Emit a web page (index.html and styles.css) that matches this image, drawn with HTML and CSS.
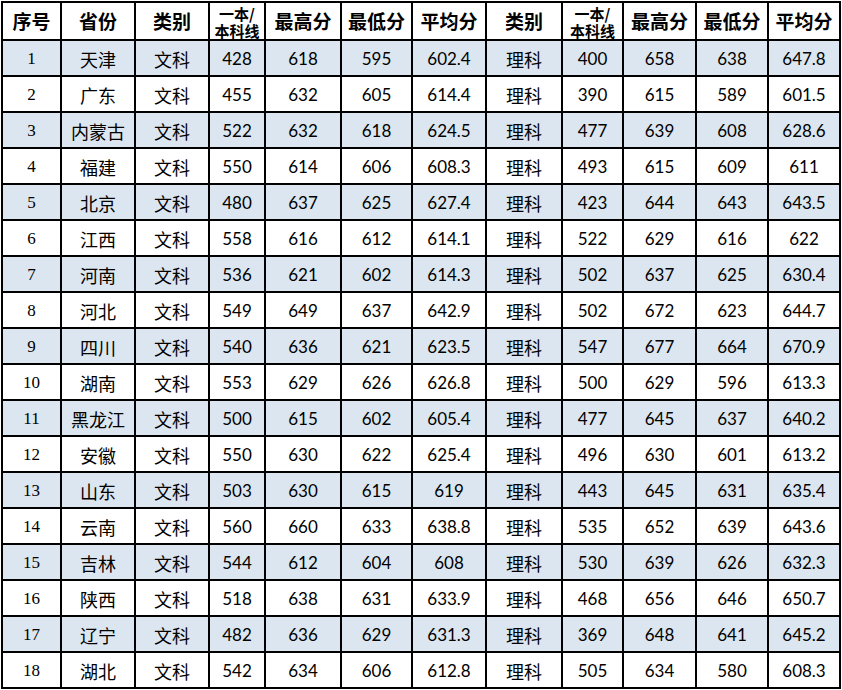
FILE: index.html
```html
<!DOCTYPE html>
<html lang="zh">
<head>
<meta charset="utf-8">
<title>分数线</title>
<link rel="stylesheet" href="styles.css">
</head>
<body>
<table class="score">
<thead>
<tr class="hd">
<th class="c1">序号</th>
<th class="c2">省份</th>
<th class="c3">类别</th>
<th class="c4 two"><span class="ln">一本/</span><span class="ln">本科线</span></th>
<th class="c5">最高分</th>
<th class="c6">最低分</th>
<th class="c7">平均分</th>
<th class="c8">类别</th>
<th class="c9 two"><span class="ln">一本/</span><span class="ln">本科线</span></th>
<th class="c10">最高分</th>
<th class="c11">最低分</th>
<th class="c12">平均分</th>
</tr>
</thead>
<tbody>
<tr class="odd"><td class="idx">1</td><td class="zh">天津</td><td class="zh">文科</td><td>428</td><td>618</td><td>595</td><td>602.4</td><td class="zh">理科</td><td>400</td><td>658</td><td>638</td><td>647.8</td></tr>
<tr><td class="idx">2</td><td class="zh">广东</td><td class="zh">文科</td><td>455</td><td>632</td><td>605</td><td>614.4</td><td class="zh">理科</td><td>390</td><td>615</td><td>589</td><td>601.5</td></tr>
<tr class="odd"><td class="idx">3</td><td class="zh">内蒙古</td><td class="zh">文科</td><td>522</td><td>632</td><td>618</td><td>624.5</td><td class="zh">理科</td><td>477</td><td>639</td><td>608</td><td>628.6</td></tr>
<tr><td class="idx">4</td><td class="zh">福建</td><td class="zh">文科</td><td>550</td><td>614</td><td>606</td><td>608.3</td><td class="zh">理科</td><td>493</td><td>615</td><td>609</td><td>611</td></tr>
<tr class="odd"><td class="idx">5</td><td class="zh">北京</td><td class="zh">文科</td><td>480</td><td>637</td><td>625</td><td>627.4</td><td class="zh">理科</td><td>423</td><td>644</td><td>643</td><td>643.5</td></tr>
<tr><td class="idx">6</td><td class="zh">江西</td><td class="zh">文科</td><td>558</td><td>616</td><td>612</td><td>614.1</td><td class="zh">理科</td><td>522</td><td>629</td><td>616</td><td>622</td></tr>
<tr class="odd"><td class="idx">7</td><td class="zh">河南</td><td class="zh">文科</td><td>536</td><td>621</td><td>602</td><td>614.3</td><td class="zh">理科</td><td>502</td><td>637</td><td>625</td><td>630.4</td></tr>
<tr><td class="idx">8</td><td class="zh">河北</td><td class="zh">文科</td><td>549</td><td>649</td><td>637</td><td>642.9</td><td class="zh">理科</td><td>502</td><td>672</td><td>623</td><td>644.7</td></tr>
<tr class="odd"><td class="idx">9</td><td class="zh">四川</td><td class="zh">文科</td><td>540</td><td>636</td><td>621</td><td>623.5</td><td class="zh">理科</td><td>547</td><td>677</td><td>664</td><td>670.9</td></tr>
<tr><td class="idx">10</td><td class="zh">湖南</td><td class="zh">文科</td><td>553</td><td>629</td><td>626</td><td>626.8</td><td class="zh">理科</td><td>500</td><td>629</td><td>596</td><td>613.3</td></tr>
<tr class="odd"><td class="idx">11</td><td class="zh">黑龙江</td><td class="zh">文科</td><td>500</td><td>615</td><td>602</td><td>605.4</td><td class="zh">理科</td><td>477</td><td>645</td><td>637</td><td>640.2</td></tr>
<tr><td class="idx">12</td><td class="zh">安徽</td><td class="zh">文科</td><td>550</td><td>630</td><td>622</td><td>625.4</td><td class="zh">理科</td><td>496</td><td>630</td><td>601</td><td>613.2</td></tr>
<tr class="odd"><td class="idx">13</td><td class="zh">山东</td><td class="zh">文科</td><td>503</td><td>630</td><td>615</td><td>619</td><td class="zh">理科</td><td>443</td><td>645</td><td>631</td><td>635.4</td></tr>
<tr><td class="idx">14</td><td class="zh">云南</td><td class="zh">文科</td><td>560</td><td>660</td><td>633</td><td>638.8</td><td class="zh">理科</td><td>535</td><td>652</td><td>639</td><td>643.6</td></tr>
<tr class="odd"><td class="idx">15</td><td class="zh">吉林</td><td class="zh">文科</td><td>544</td><td>612</td><td>604</td><td>608</td><td class="zh">理科</td><td>530</td><td>639</td><td>626</td><td>632.3</td></tr>
<tr><td class="idx">16</td><td class="zh">陕西</td><td class="zh">文科</td><td>518</td><td>638</td><td>631</td><td>633.9</td><td class="zh">理科</td><td>468</td><td>656</td><td>646</td><td>650.7</td></tr>
<tr class="odd"><td class="idx">17</td><td class="zh">辽宁</td><td class="zh">文科</td><td>482</td><td>636</td><td>629</td><td>631.3</td><td class="zh">理科</td><td>369</td><td>648</td><td>641</td><td>645.2</td></tr>
<tr><td class="idx">18</td><td class="zh">湖北</td><td class="zh">文科</td><td>542</td><td>634</td><td>606</td><td>612.8</td><td class="zh">理科</td><td>505</td><td>634</td><td>580</td><td>608.3</td></tr>
</tbody>
</table>
</body>
</html>
```
FILE: styles.css
```css
html, body {
  margin: 0;
  padding: 0;
  background: #ffffff;
}

body {
  padding: 1px 0 0 1px;
}

.score {
  width: 840px;
  table-layout: fixed;
  border-collapse: separate;
  border-spacing: 0;
  border-left: 2px solid #000;
  border-top: 2px solid #000;
  color: #000;
}

.score th,
.score td {
  box-sizing: border-box;
  border-right: 2px solid #000;
  border-bottom: 2px solid #000;
  padding: 0;
  text-align: center;
  vertical-align: middle;
  white-space: nowrap;
}

.score td {
  height: 36px;
  font-family: Lato, "Liberation Sans", sans-serif;
  font-size: 17px;
  line-height: 20px;
  padding-top: 2px;
}

.hd th {
  height: 38px;
  font-family: "Noto Sans CJK SC", sans-serif;
  font-weight: bold;
  font-size: 19px;
  line-height: 22px;
}

.hd th.two {
  font-size: 15px;
  line-height: 16px;
  padding-top: 1px;
}

.ln {
  display: block;
  height: 17px;
  line-height: 17px;
  overflow: visible;
}

.c1 { width: 59px; }
.c2 { width: 74px; }
.c3 { width: 74px; }
.c4 { width: 56px; }
.c5 { width: 76px; }
.c6 { width: 71px; }
.c7 { width: 74px; }
.c8 { width: 76px; }
.c9 { width: 61px; }
.c10 { width: 73px; }
.c11 { width: 72px; }
.c12 { width: 72px; }

.score td.idx {
  font-family: "Liberation Serif", serif;
  font-size: 17px;
}

.score td.zh {
  font-family: "Noto Sans CJK SC", sans-serif;
  font-size: 18px;
  font-weight: normal;
}

.odd td {
  background: #dce6f1;
}
```
